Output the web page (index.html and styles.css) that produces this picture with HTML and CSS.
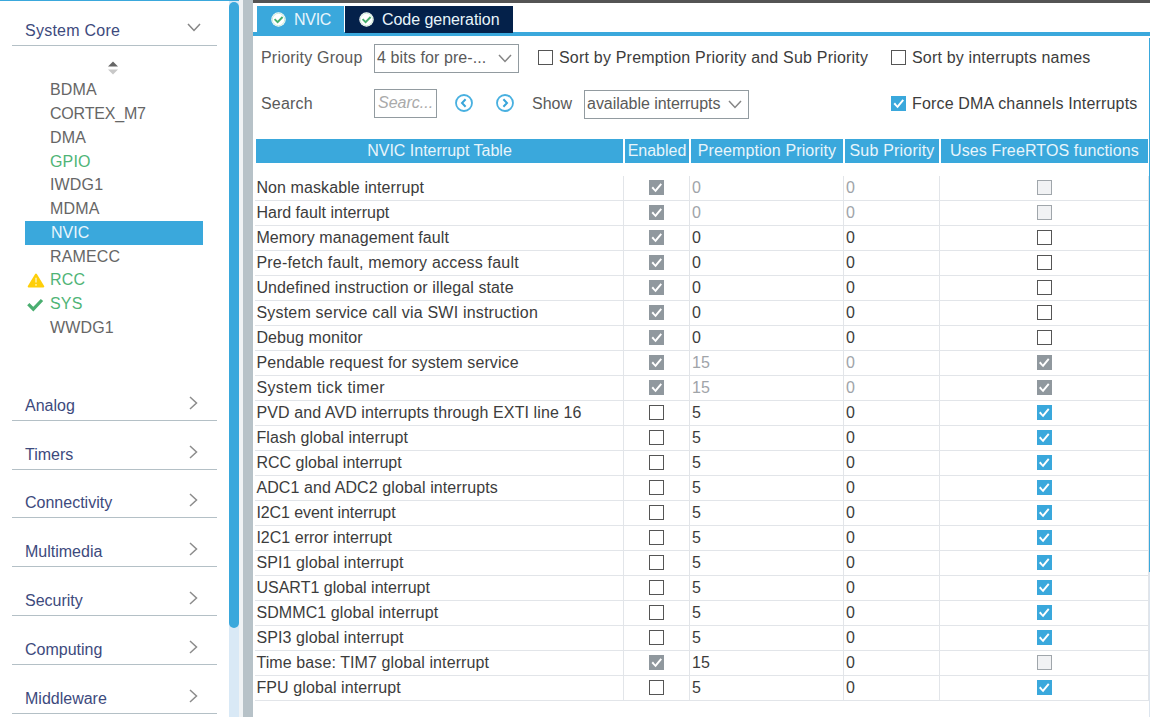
FILE: index.html
```html
<!DOCTYPE html>
<html lang="en">
<head>
<meta charset="utf-8">
<title>NVIC Configuration</title>
<link rel="stylesheet" href="styles.css">
</head>
<body>
<svg class="defs" width="0" height="0">
  <symbol id="right" viewBox="0 0 9 14"><path d="M1 1l6.5 6L1 13" fill="none" stroke="#8c8c8c" stroke-width="1.5"/></symbol>
  <symbol id="down" viewBox="0 0 14 9"><path d="M1 1l6 6.5L13 1" fill="none" stroke="#858585" stroke-width="1.5"/></symbol>
  <symbol id="ok" viewBox="0 0 15 15"><circle cx="7.5" cy="7.5" r="7.2" fill="#fff"/><circle cx="7.5" cy="7.5" r="6.2" fill="none" stroke="#a9dcbc" stroke-width=".6"/><path d="M3.6 7.2l3 3 5-5.2" fill="none" stroke="#45af6c" stroke-width="1.9"/></symbol>
</svg>
<div class="app">
  <aside class="side">
    <div class="cat first"><span>System Core</span><svg class="dn" width="14" height="9"><use href="#down"/></svg></div>
    <div class="sort"><svg width="12" height="14" viewBox="0 0 12 14"><path d="M1 5.6L6 .4l5 5.2z" fill="#666"/><path d="M1 8.4h10L6 13.4z" fill="#c8c8c8"/></svg></div>
    <ul class="items">
      <li>BDMA</li>
      <li class="cortex">CORTEX_M7</li>
      <li>DMA</li>
      <li class="green">GPIO</li>
      <li>IWDG1</li>
      <li>MDMA</li>
      <li class="sel">NVIC</li>
      <li>RAMECC</li>
      <li class="green"><svg class="mark" width="18" height="15" viewBox="0 0 18 15"><path d="M9 1.5L16.3 13.5H1.7z" fill="#fecf0a" stroke="#fecf0a" stroke-width="2" stroke-linejoin="round"/><path d="M9 4.8v4.7M9 11v1.8" stroke="#fff1a8" stroke-width="1.5"/></svg>RCC</li>
      <li class="green"><svg class="mark" width="18" height="15" viewBox="0 0 18 15"><path d="M1.3 7.2l5 5L15 3" fill="none" stroke="#4aae70" stroke-width="3.2"/></svg>SYS</li>
      <li>WWDG1</li>
    </ul>
    <div class="cat"><span>Analog</span><svg width="9" height="14"><use href="#right"/></svg></div>
    <div class="cat"><span>Timers</span><svg width="9" height="14"><use href="#right"/></svg></div>
    <div class="cat"><span>Connectivity</span><svg width="9" height="14"><use href="#right"/></svg></div>
    <div class="cat"><span>Multimedia</span><svg width="9" height="14"><use href="#right"/></svg></div>
    <div class="cat"><span>Security</span><svg width="9" height="14"><use href="#right"/></svg></div>
    <div class="cat"><span>Computing</span><svg width="9" height="14"><use href="#right"/></svg></div>
    <div class="cat"><span>Middleware</span><svg width="9" height="14"><use href="#right"/></svg></div>
  </aside>
  <div class="scroll"><div class="thumb"></div></div>
  <div class="split"></div>
  <main class="main">
    <nav class="tabs">
      <div class="tab active"><svg width="15" height="15"><use href="#ok"/></svg><span>NVIC</span></div>
      <div class="tab dark"><svg width="15" height="15"><use href="#ok"/></svg><span>Code generation</span></div>
    </nav>
    <div class="content">
      <div class="bar one">
        <span class="lbl">Priority Group</span>
        <div class="combo prio"><span>4 bits for pre-...</span><svg width="14" height="9"><use href="#down"/></svg></div>
        <label class="opt sortp"><i class="cb"></i><span>Sort by Premption Priority and Sub Priority</span></label>
        <label class="opt right"><i class="cb"></i><span class="names">Sort by interrupts names</span></label>
      </div>
      <div class="bar two">
        <span class="lbl">Search</span>
        <div class="search">Searc...</div>
        <svg class="prev" width="20" height="20" viewBox="0 0 20 20"><circle cx="10" cy="10" r="8" fill="none" stroke="#48b0e0" stroke-width="1.8"/><path d="M11.6 6.2L8 10l3.6 3.8" fill="none" stroke="#38a5da" stroke-width="2"/></svg>
        <svg class="next" width="20" height="20" viewBox="0 0 20 20"><circle cx="10" cy="10" r="8" fill="none" stroke="#48b0e0" stroke-width="1.8"/><path d="M8.4 6.2L12 10l-3.6 3.8" fill="none" stroke="#38a5da" stroke-width="2"/></svg>
        <span class="show">Show</span>
        <div class="combo avail"><span>available interrupts</span><svg width="14" height="9"><use href="#down"/></svg></div>
        <label class="opt right"><i class="cb on"></i><span class="force">Force DMA channels Interrupts</span></label>
      </div>
      <div class="head"><div>NVIC Interrupt Table</div><div>Enabled</div><div class="wide">Preemption Priority</div><div class="wider">Sub Priority</div><div class="wide">Uses FreeRTOS functions</div></div>
      <div class="rows">
        <div class="row ro"><b>Non maskable interrupt</b><b><i class="cb off on"></i></b><b>0</b><b>0</b><b><i class="cb off"></i></b></div>
        <div class="row ro tight"><b>Hard fault interrupt</b><b><i class="cb off on"></i></b><b>0</b><b>0</b><b><i class="cb off"></i></b></div>
        <div class="row"><b>Memory management fault</b><b><i class="cb off on"></i></b><b>0</b><b>0</b><b><i class="cb"></i></b></div>
        <div class="row loose"><b>Pre-fetch fault, memory access fault</b><b><i class="cb off on"></i></b><b>0</b><b>0</b><b><i class="cb"></i></b></div>
        <div class="row"><b>Undefined instruction or illegal state</b><b><i class="cb off on"></i></b><b>0</b><b>0</b><b><i class="cb"></i></b></div>
        <div class="row loose"><b>System service call via SWI instruction</b><b><i class="cb off on"></i></b><b>0</b><b>0</b><b><i class="cb"></i></b></div>
        <div class="row"><b>Debug monitor</b><b><i class="cb off on"></i></b><b>0</b><b>0</b><b><i class="cb"></i></b></div>
        <div class="row ro"><b>Pendable request for system service</b><b><i class="cb off on"></i></b><b>15</b><b>0</b><b><i class="cb off on"></i></b></div>
        <div class="row ro looser"><b>System tick timer</b><b><i class="cb off on"></i></b><b>15</b><b>0</b><b><i class="cb off on"></i></b></div>
        <div class="row"><b>PVD and AVD interrupts through EXTI line 16</b><b><i class="cb"></i></b><b>5</b><b>0</b><b><i class="cb on"></i></b></div>
        <div class="row"><b>Flash global interrupt</b><b><i class="cb"></i></b><b>5</b><b>0</b><b><i class="cb on"></i></b></div>
        <div class="row tight"><b>RCC global interrupt</b><b><i class="cb"></i></b><b>5</b><b>0</b><b><i class="cb on"></i></b></div>
        <div class="row"><b>ADC1 and ADC2 global interrupts</b><b><i class="cb"></i></b><b>5</b><b>0</b><b><i class="cb on"></i></b></div>
        <div class="row tighter"><b>I2C1 event interrupt</b><b><i class="cb"></i></b><b>5</b><b>0</b><b><i class="cb on"></i></b></div>
        <div class="row tight"><b>I2C1 error interrupt</b><b><i class="cb"></i></b><b>5</b><b>0</b><b><i class="cb on"></i></b></div>
        <div class="row"><b>SPI1 global interrupt</b><b><i class="cb"></i></b><b>5</b><b>0</b><b><i class="cb on"></i></b></div>
        <div class="row tight"><b>USART1 global interrupt</b><b><i class="cb"></i></b><b>5</b><b>0</b><b><i class="cb on"></i></b></div>
        <div class="row"><b>SDMMC1 global interrupt</b><b><i class="cb"></i></b><b>5</b><b>0</b><b><i class="cb on"></i></b></div>
        <div class="row"><b>SPI3 global interrupt</b><b><i class="cb"></i></b><b>5</b><b>0</b><b><i class="cb on"></i></b></div>
        <div class="row"><b>Time base: TIM7 global interrupt</b><b><i class="cb off on"></i></b><b>15</b><b>0</b><b><i class="cb off"></i></b></div>
        <div class="row"><b>FPU global interrupt</b><b><i class="cb"></i></b><b>5</b><b>0</b><b><i class="cb on"></i></b></div>
      </div>
    </div>
    <div class="vbar"></div>
  </main>
</div>
</body>
</html>
```

FILE: styles.css
```css
* { box-sizing: border-box; }
body { margin: 0; background: #fff; font: 16px/24px "Liberation Sans", Arial, sans-serif; color: #3c3c3c; overflow: hidden; white-space: nowrap; }
svg { display: block; flex: none; }
.defs { position: absolute; }
.app { display: flex; width: 1150px; height: 717px; overflow: hidden; }

/* category sidebar */
.side { width: 229px; border-top: 1px solid #3aa8dc; padding-left: 12px; }
.cat { display: flex; width: 205px; height: 48.8px; padding: 0 19px 2px 13px; align-items: flex-end; justify-content: space-between; border-bottom: 1px solid #b4c0c6; color: #3d4a7d; }
.cat svg { margin-bottom: 8px; }
.cat.first { height: 45px; padding-right: 16px; letter-spacing: .25px; }
.cat.first svg { margin-bottom: 11px; }
.sort { height: 32.4px; padding: 15px 0 0 95px; }
.items { list-style: none; margin: 0; padding: 0; height: 293.6px; }
.items li { display: flex; align-items: center; width: 178px; height: 23.78px; margin-left: 13px; padding-left: 25px; color: #666; letter-spacing: .15px; }
.items .cortex { letter-spacing: -.2px; }
.items .sel { background: #3aa8dc; color: #e9f6fc; padding-left: 26px; letter-spacing: 0; }
.items .green { color: #4fb477; }
.mark { margin: 0 5px 0 -23px; }
.scroll { width: 10px; background: #d9e9f6; border-top: 1px solid #3aa8dc; }
.thumb { height: 626px; margin-top: 1px; background: #3aa8dc; border-radius: 5px; }
.split { width: 14px; border-left: 4px solid #f0f3f5; background: #b7c2c8; }

/* editor pane */
.main { position: relative; width: 897px; border-top: 3px solid #545454; }
.tabs { display: flex; height: 33px; padding: 3px 0 0 4px; border-bottom: 4px solid #3aa8dc; gap: 1px; }
.tab { display: flex; align-items: center; height: 27px; color: #e8f5fb; padding-left: 14px; gap: 8px; }
.tab svg { margin-top: -1px; }
.active { width: 87px; background: #3aa8dc; letter-spacing: -.3px; }
.dark { width: 168px; background: #04214a; letter-spacing: -.05px; }
.content { padding-left: 2px; }
.bar { display: flex; align-items: center; padding-left: 6px; height: 44px; color: #5a5a5a; }
.bar.two { height: 48px; }
.lbl { width: 113px; letter-spacing: .2px; }
.combo { display: flex; align-items: center; justify-content: space-between; height: 29px; border: 1px solid #929ba0; padding: 0 6px 0 2px; }
.prio { width: 145px; letter-spacing: .1px; }
.avail { width: 165px; margin-left: 12px; letter-spacing: -.05px; }
.search { width: 63px; height: 29px; line-height: 26px; margin-top: -2px; border: 1px solid #929ba0; padding-left: 3px; color: #aaa; font-style: italic; }
.prev, .next { margin-top: -2px; }
.prev { margin-left: 17px; }
.next { margin-left: 21px; }
.show { margin-left: 17px; }
.opt { display: flex; align-items: center; gap: 6px; color: #3c3c3c; letter-spacing: .17px; }
.sortp { margin-left: 19px; letter-spacing: .2px; }
.right { margin-left: auto; width: 259px; }
.cb { display: block; position: relative; flex: none; width: 15px; height: 15px; margin-top: -1px; border: 1px solid #555; background: #fff; }
.off { border-color: #a0a6ab; background: #f1f2f4; }
.on { border-color: #3aa8dc; background: #3aa8dc; }
.off.on { border-color: #90989e; background: #90989e; }
.on::after { content: ""; position: absolute; inset: 0; background: #fff; clip-path: polygon(1.5px 7px, 3px 5.6px, 5.3px 8.5px, 10.5px 2.3px, 12px 3.6px, 5.6px 11.3px); }

/* interrupt table */
.head, .row { display: grid; grid-template-columns: 369px 66px 154px 96px 209px; }
.head { height: 24px; margin-top: 11px; color: #e8f5fb; text-align: center; }
.head div { background: #3aa8dc; margin: 0 0 0 1px; border-right: 1px solid #fff; }
.head .wide { letter-spacing: .12px; }
.head .wider { letter-spacing: .2px; }
.rows { margin-top: 13px; }
.row { height: 25px; border-bottom: 1px solid #e2e5e9; letter-spacing: .1px; }
.tight { letter-spacing: .02px; }
.tighter { letter-spacing: -.07px; }
.loose { letter-spacing: .2px; }
.looser { letter-spacing: .4px; }
.row b { font-weight: normal; border-right: 1px solid #e2e5e9; padding-left: 2px; display: flex; align-items: center; letter-spacing: inherit; }
.row b:first-child { padding-left: 1.4px; }
.row b:nth-child(2), .row b:nth-child(5) { justify-content: center; padding: 0; }
.row b:nth-child(3), .row b:nth-child(4) { letter-spacing: 0; }
.ro b:nth-child(3), .ro b:nth-child(4) { color: #a0a4a9; }
.vbar { position: absolute; right: 0; top: 35px; width: 1px; height: 679px; background: linear-gradient(#3aa8dc 534px, #dde5ee 534px); }
```
